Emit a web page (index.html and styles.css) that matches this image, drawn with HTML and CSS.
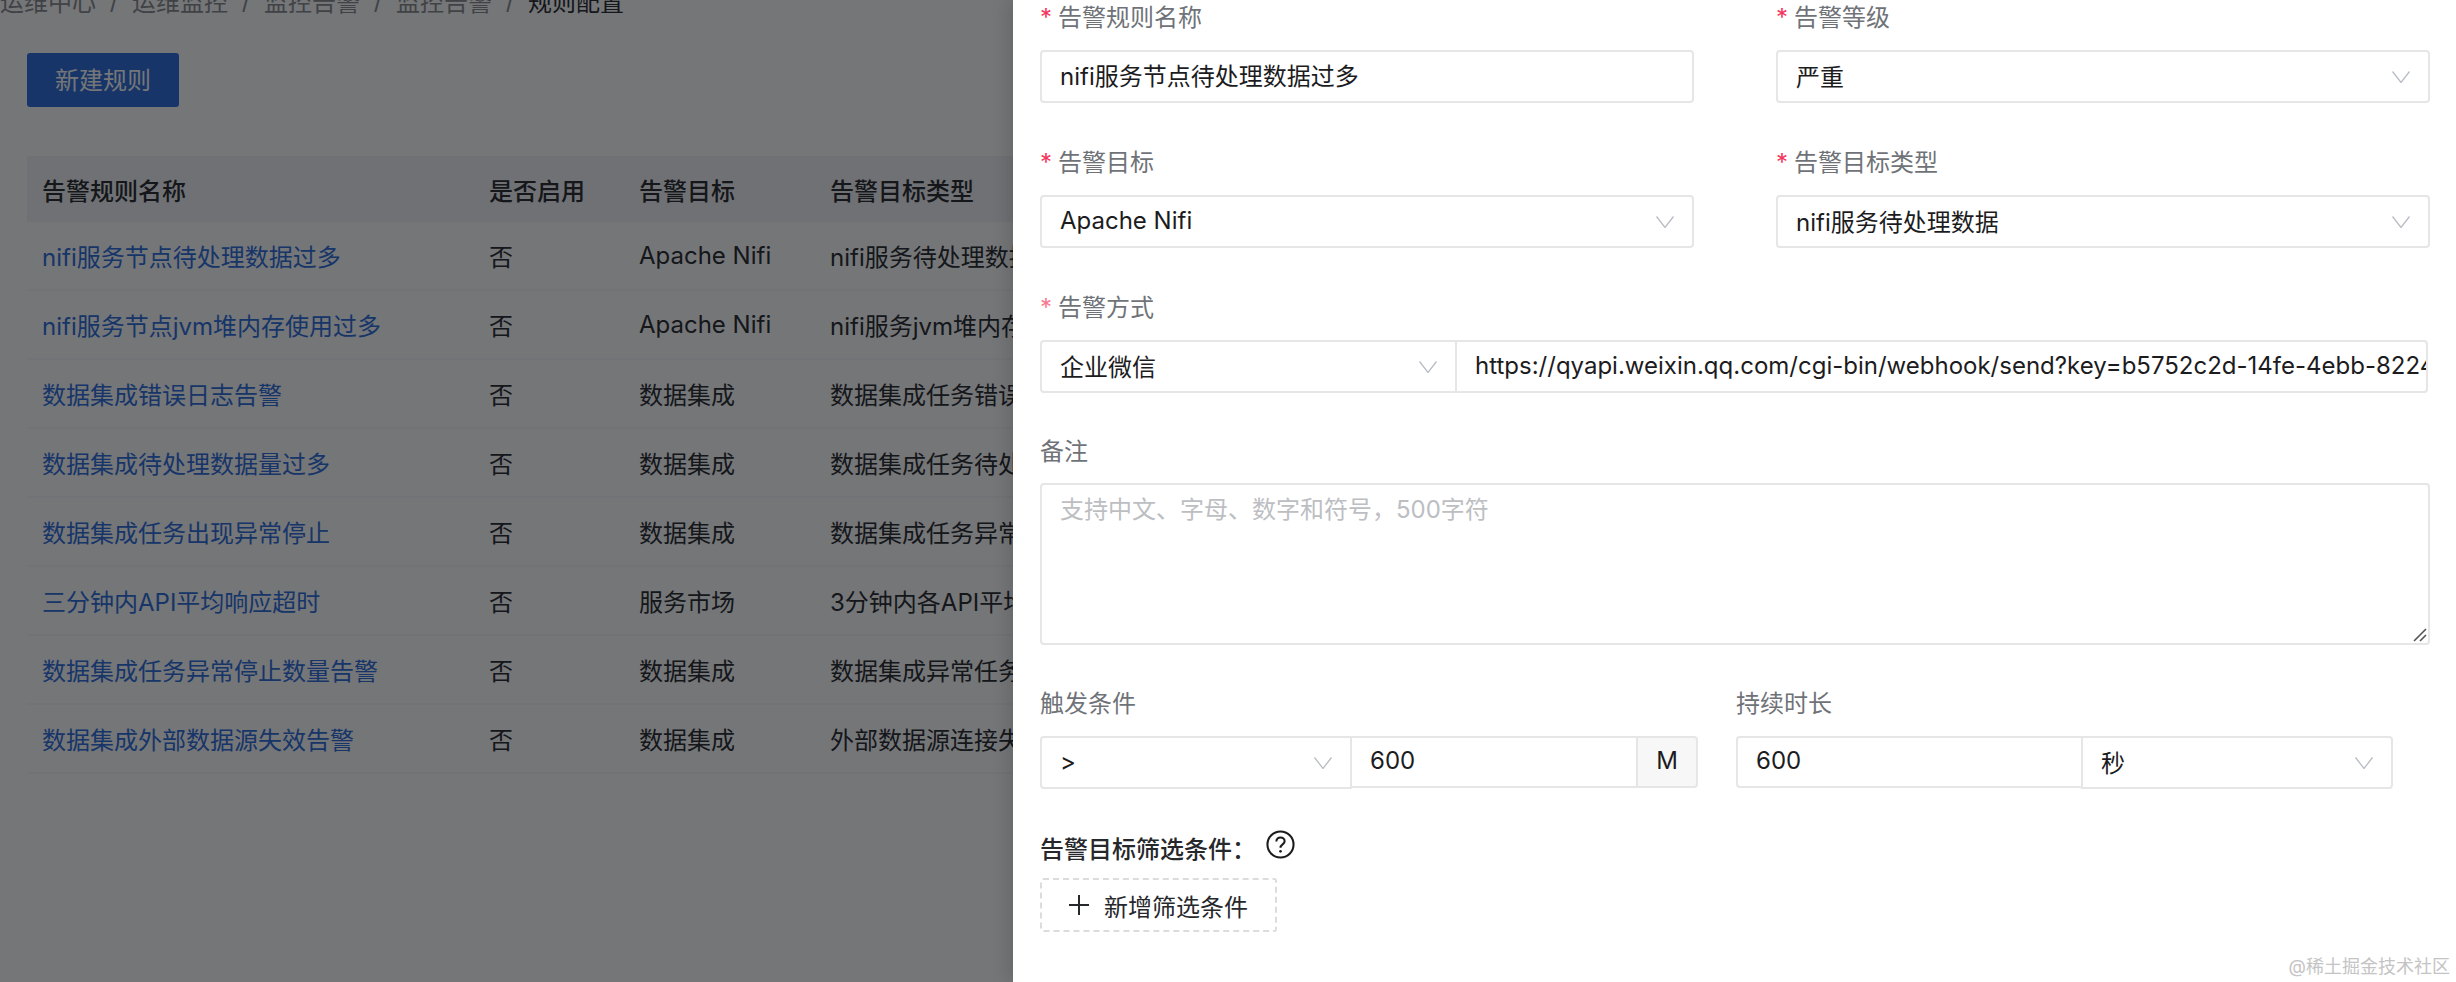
FILE: index.html
```html
<!DOCTYPE html>
<html lang="zh-CN">
<head>
<meta charset="utf-8">
<title>规则配置</title>
<link rel="stylesheet" href="styles.css">
</head>
<body>
<div class="page">
  <nav class="crumbs">
    <span>运维中心</span><i>/</i><span>运维监控</span><i>/</i><span>监控告警</span><i>/</i><span>监控告警</span><i>/</i><b>规则配置</b>
  </nav>
  <button class="primary">新建规则</button>
  <div class="table">
    <div class="row head"><div>告警规则名称</div><div>是否启用</div><div>告警目标</div><div>告警目标类型</div></div>
    <div class="row"><a>nifi服务节点待处理数据过多</a><div>否</div><div>Apache Nifi</div><div>nifi服务待处理数据过多</div></div>
    <div class="row"><a>nifi服务节点jvm堆内存使用过多</a><div>否</div><div>Apache Nifi</div><div>nifi服务jvm堆内存使用过多</div></div>
    <div class="row"><a>数据集成错误日志告警</a><div>否</div><div>数据集成</div><div>数据集成任务错误日志</div></div>
    <div class="row"><a>数据集成待处理数据量过多</a><div>否</div><div>数据集成</div><div>数据集成任务待处理数据</div></div>
    <div class="row"><a>数据集成任务出现异常停止</a><div>否</div><div>数据集成</div><div>数据集成任务异常停止</div></div>
    <div class="row"><a>三分钟内API平均响应超时</a><div>否</div><div>服务市场</div><div>3分钟内各API平均响应</div></div>
    <div class="row"><a>数据集成任务异常停止数量告警</a><div>否</div><div>数据集成</div><div>数据集成异常任务数量</div></div>
    <div class="row"><a>数据集成外部数据源失效告警</a><div>否</div><div>数据集成</div><div>外部数据源连接失效</div></div>
  </div>
</div>

<div class="mask"></div>

<aside class="drawer">
  <div class="pair">
    <div class="field">
      <label class="label req">告警规则名称</label>
      <div class="box">nifi服务节点待处理数据过多</div>
    </div>
    <div class="field">
      <label class="label req">告警等级</label>
      <div class="box select"><span>严重</span><svg class="chev" viewBox="0 0 18 12"><path d="M.5.5 9 11.5 17.5.5"/></svg></div>
    </div>
  </div>
  <div class="pair">
    <div class="field">
      <label class="label req">告警目标</label>
      <div class="box select"><span>Apache Nifi</span><svg class="chev" viewBox="0 0 18 12"><path d="M.5.5 9 11.5 17.5.5"/></svg></div>
    </div>
    <div class="field">
      <label class="label req">告警目标类型</label>
      <div class="box select"><span>nifi服务待处理数据</span><svg class="chev" viewBox="0 0 18 12"><path d="M.5.5 9 11.5 17.5.5"/></svg></div>
    </div>
  </div>
  <div class="field full">
    <label class="label req light">告警方式</label>
    <div class="group">
      <div class="box select method"><span>企业微信</span><svg class="chev" viewBox="0 0 18 12"><path d="M.5.5 9 11.5 17.5.5"/></svg></div>
      <div class="box url">https://qyapi.weixin.qq.com/cgi-bin/webhook/send?key=b5752c2d-14fe-4ebb-8224-5f3a91c07de6</div>
    </div>
  </div>
  <div class="field note">
    <label class="label tight">备注</label>
    <div class="box area">支持中文、字母、数字和符号，500字符
      <svg class="grip" viewBox="0 0 14 14"><path d="M1 13 13 1M7 13l6-6"/></svg>
    </div>
  </div>
  <div class="triggers">
    <div class="field cond">
      <label class="label">触发条件</label>
      <div class="group">
        <div class="box select op"><span>&gt;</span><svg class="chev" viewBox="0 0 18 12"><path d="M.5.5 9 11.5 17.5.5"/></svg></div>
        <div class="box num">600</div>
        <div class="box addon">M</div>
      </div>
    </div>
    <div class="field dur">
      <label class="label">持续时长</label>
      <div class="group">
        <div class="box durnum">600</div>
        <div class="box select unit"><span>秒</span><svg class="chev" viewBox="0 0 18 12"><path d="M.5.5 9 11.5 17.5.5"/></svg></div>
      </div>
    </div>
  </div>
  <div class="filter-title">
    <span>告警目标筛选条件：</span>
    <svg class="help" viewBox="0 0 28 28"><circle cx="14" cy="14" r="12.6"/><path d="M10 11.2c0-2.4 1.8-4 4-4s4 1.6 4 3.7c0 3-4 3-4 6.2"/><circle class="dot" cx="14" cy="20.6" r="1.3"/></svg>
  </div>
  <button class="dashed"><svg class="plus" viewBox="0 0 20 20"><path d="M10 0v20M0 10h20"/></svg>新增筛选条件</button>
  <div class="watermark">@稀土掘金技术社区</div>
</aside>
</body>
</html>
```
FILE: styles.css
```css
* { box-sizing: border-box; }
html, body { margin: 0; height: 100%; overflow: hidden; }
body {
  background: #fff;
  font-family: Inter, "Noto Sans CJK SC", sans-serif;
  font-size: 24px;
  color: #2a2d31;
}
.page { padding-left: 27px; height: 982px; overflow: hidden; }

.crumbs {
  display: flex;
  align-items: center;
  height: 34px;
  margin: -17px 0 0 -27px;
  color: #8b8d90;
}
.crumbs i { font-style: normal; width: 36px; text-align: center; }
.crumbs b { font-weight: 400; color: #2a2d31; }

.primary {
  display: block;
  width: 152px;
  height: 54px;
  margin-top: 36px;
  padding: 0 0 3px;
  border: 0;
  border-radius: 3px;
  background: #2f6fdc;
  color: #fff;
  font: inherit;
}

.table { width: 2400px; margin-top: 49px; }
.row {
  display: grid;
  grid-template-columns: 447px 150px 191px 1fr;
  align-items: center;
  height: 69px;
  padding-left: 15px;
  border-bottom: 2px solid #f8f9fa;
  white-space: nowrap;
}
.row.head { height: 66px; background: #f3f4f6; font-weight: 500; border-bottom: 0; }
.row a { color: #2f6fdc; }

.mask { position: absolute; inset: 0; background: rgba(3, 6, 9, .55); }

.drawer {
  position: absolute;
  top: 0;
  right: 0;
  bottom: 0;
  left: 1013px;
  padding: 0 26px 0 27px;
  background: #fff;
  box-shadow: -6px 0 16px rgba(0, 0, 0, .12);
  color: #1c1c1e;
}

.pair { display: grid; grid-template-columns: 654px 654px; column-gap: 82px; }
.field { display: flex; flex-direction: column; }
.pair .field { height: 145px; }
.full { height: 145px; }
.note { height: 251px; }
.label { display: block; flex: none; height: 50px; padding-top: 3px; line-height: 30px; color: #6f7378; }
.label.tight { height: 48px; padding-top: 2px; }
.req::before { content: "*"; display: inline-block; width: 18px; color: #f5365c; }
.req.light::before { color: #f7798f; }

.box {
  display: flex;
  align-items: center;
  height: 53px;
  padding: 0 18px 4px;
  border: 2px solid #e6e6e6;
  border-radius: 4px;
  background: #fff;
  white-space: nowrap;
  overflow: hidden;
}
.select { justify-content: space-between; }
.select span { position: relative; top: 1px; }
.chev { width: 18px; height: 12px; flex: none; position: relative; top: 2px; }
.chev path { fill: none; stroke: #b8bcc4; stroke-width: 1.3; }

.group { display: flex; }
.method { width: 417px; border-radius: 4px 0 0 4px; }
.url { width: 971px; border-left-width: 0; border-radius: 0 4px 4px 0; display: block; line-height: 47px; padding-right: 20px; }

.area {
  position: relative;
  display: block;
  width: 1390px;
  height: 162px;
  padding-top: 10px;
  line-height: 30px;
  color: #bcbec2;
}
.grip { position: absolute; right: 1px; bottom: 1px; width: 14px; height: 14px; }
.grip path { fill: none; stroke: #555; stroke-width: 1.6; }

.triggers { display: flex; height: 103px; }
.cond { width: 696px; }
.op { width: 312px; border-radius: 4px 0 0 4px; }
.num { width: 284px; border-left-width: 0; border-right-width: 0; border-radius: 0; height: 52px; }
.addon { width: 62px; padding: 0 0 3px; justify-content: center; background: #f7f7f7; border-radius: 0 4px 4px 0; height: 52px; }
.durnum { width: 345px; border-right-width: 0; border-radius: 4px 0 0 4px; height: 52px; }
.unit { width: 312px; border-radius: 0 4px 4px 0; }

.filter-title {
  display: flex;
  align-items: center;
  height: 30px;
  margin-top: 43px;
  font-weight: 500;
  color: #26282b;
}
.help { width: 29px; height: 29px; margin-left: 10px; margin-top: -5px; }
.help circle { fill: none; stroke: #1c1c1e; stroke-width: 2; }
.help path { fill: none; stroke: #1c1c1e; stroke-width: 2; }
.help .dot { fill: #1c1c1e; stroke: none; }

.dashed {
  display: flex;
  align-items: center;
  width: 237px;
  height: 54px;
  margin-top: 16px;
  padding: 0 0 0 27px;
  border: 2px dashed #dcdcdc;
  border-radius: 3px;
  background: #fff;
  color: #26282b;
  font: inherit;
}
.plus { width: 20px; height: 20px; margin-right: 15px; }
.plus path { stroke: #26282b; stroke-width: 2; }

.watermark {
  position: absolute;
  right: 6px;
  bottom: 2px;
  font-size: 18px;
  line-height: 26px;
  color: #c4c4c4;
}
```
